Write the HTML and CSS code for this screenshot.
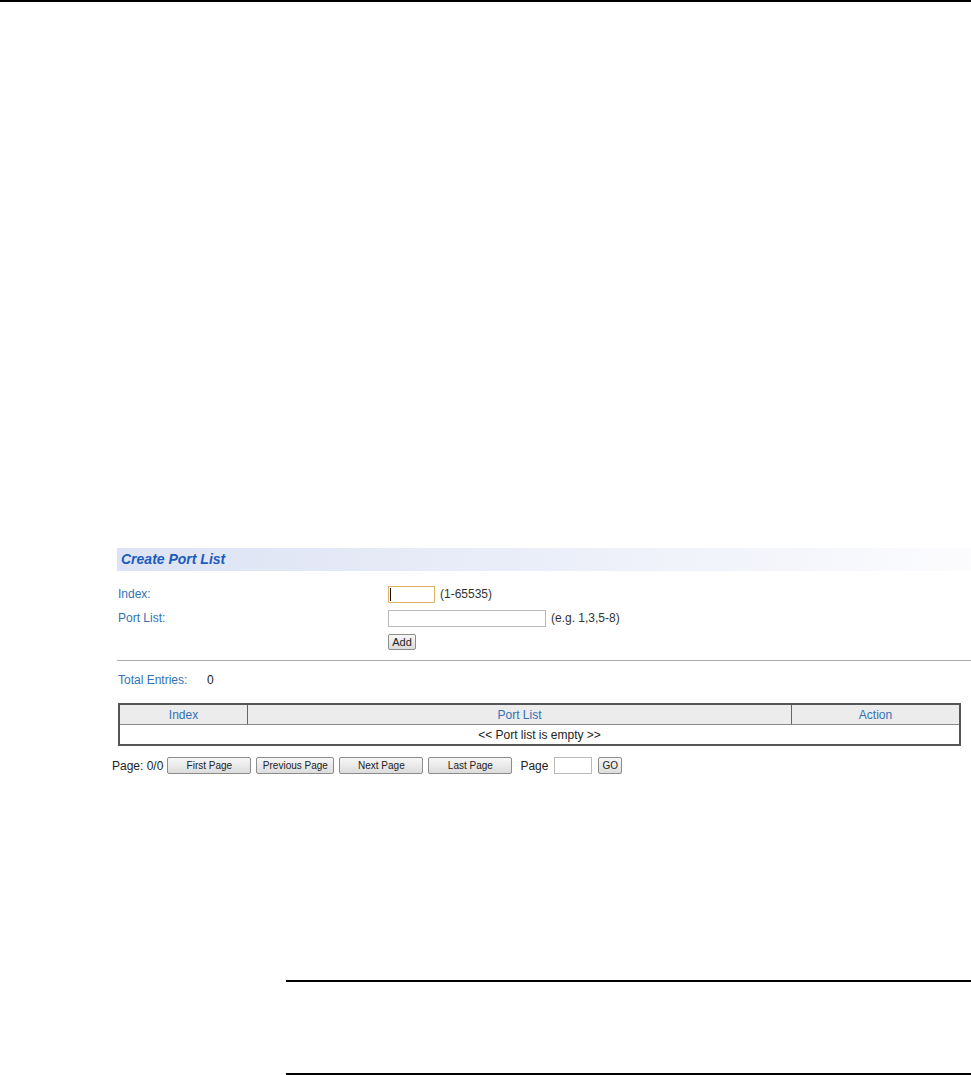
FILE: index.html
```html
<!DOCTYPE html>
<html>
<head>
<meta charset="utf-8">
<link rel="stylesheet" href="styles.css">
</head>
<body>
<div class="topline"></div>
<div class="page">
  <div class="panel">
    <div class="titlebar">Create Port List</div>
    <div class="form">
      <div class="row">
        <span class="label">Index:</span>
        <span class="field"><span class="focuswrap"><input class="inp inp-index" type="text" value=""><span class="caret"></span></span><span class="hint">(1-65535)</span></span>
      </div>
      <div class="row">
        <span class="label">Port List:</span>
        <span class="field"><input class="inp inp-list" type="text" value=""><span class="hint">(e.g. 1,3,5-8)</span></span>
      </div>
      <div class="row row-btn">
        <span class="label"></span>
        <span class="field"><button class="btn">Add</button></span>
      </div>
    </div>
    <div class="divider"></div>
    <div class="total"><span class="label">Total Entries:</span><span class="count">0</span></div>
    <table class="grid">
      <thead>
        <tr><th class="c-index">Index</th><th class="c-list">Port List</th><th class="c-action">Action</th></tr>
      </thead>
      <tbody>
        <tr><td colspan="3">&lt;&lt; Port list is empty &gt;&gt;</td></tr>
      </tbody>
    </table>
  </div>
  <div class="pager">
    <span class="ptext">Page: 0/0</span>
    <button class="btn pbtn w-first">First Page</button>
    <button class="btn pbtn w-prev">Previous Page</button>
    <button class="btn pbtn w-next">Next Page</button>
    <button class="btn pbtn w-last">Last Page</button>
    <span class="ptext pgo">Page</span>
    <input class="inp inp-page" type="text">
    <button class="btn">GO</button>
  </div>
</div>
<div class="note">
  <div class="note-line"></div>
  <div class="note-body"></div>
  <div class="note-line"></div>
</div>
</body>
</html>
```
FILE: styles.css
```css
html, body {
  margin: 0;
  padding: 0;
  background: #ffffff;
  font-family: "Liberation Sans", Arial, sans-serif;
  font-size: 12px;
  color: #222;
}
.topline {
  height: 2px;
  background: #000;
}
.page {
  padding-top: 546px;
  padding-left: 112px;
}
.panel {
  padding-left: 5px;
}
.titlebar {
  height: 23px;
  line-height: 23px;
  padding-left: 4px;
  background: linear-gradient(to right, #dde3f4 0%, #e8ecf8 40%, #f3f5fb 75%, #fcfcfe 100%);
  color: #1c5bbd;
  font-weight: bold;
  font-style: italic;
  font-size: 14px;
}
.form {
  padding-top: 11px;
}
.row {
  display: flex;
  align-items: center;
  height: 24px;
}
.label {
  color: #3271b5;
  width: 270px;
  padding-left: 1px;
}
.field {
  display: flex;
  align-items: center;
}
.inp {
  box-sizing: border-box;
  height: 17px;
  border: 1px solid #b9b9b9;
  background: #fff;
  margin: 0;
  padding: 0 2px;
  font-family: "Liberation Sans", Arial, sans-serif;
  font-size: 12px;
}
.focuswrap {
  position: relative;
  display: flex;
}
.inp-index {
  width: 47px;
  border-color: #dcb461;
}
.caret {
  position: absolute;
  left: 2px;
  top: 2px;
  width: 1px;
  height: 13px;
  background: #111;
}
.inp-list {
  width: 158px;
}
.hint {
  margin-left: 5px;
  color: #333;
}
.btn {
  box-sizing: border-box;
  height: 17px;
  padding: 0 3px;
  margin: 0;
  white-space: nowrap;
  font-family: "Liberation Sans", Arial, sans-serif;
  font-size: 10px;
  color: #222;
  background: linear-gradient(#f7f7f7, #dcdcdc);
  border: 1px solid #8c8c8c;
  border-radius: 2px;
}
.row-btn .btn {
  font-size: 11px;
  width: 28px;
  height: 16px;
}
.divider {
  margin-top: 6px;
  height: 1px;
  background: #a9a9a9;
}
.total {
  display: flex;
  height: 17px;
  align-items: center;
  margin-top: 10px;
}
.total .label {
  width: 89px;
}
.count {
  color: #222;
}
.grid {
  margin-top: 15px;
  margin-left: 1px;
  width: 843px;
  border-collapse: collapse;
  border: 2px solid #555;
}
.grid th {
  background: #ececec;
  color: #3271b5;
  font-weight: normal;
  height: 19px;
  padding: 0;
  border: 1px solid #666;
  border-bottom: 1px solid #888;
}
.grid td {
  height: 19px;
  padding: 0;
  text-align: center;
  color: #222;
}
.c-index { width: 127px; }
.c-action { width: 167px; }
.pager {
  display: flex;
  align-items: center;
  margin-top: 11px;
  height: 17px;
}
.ptext {
  color: #222;
  margin-right: 4px;
}
.pbtn {
  margin-right: 5px;
}
.w-first { width: 84px; }
.w-prev { width: 78px; }
.w-next { width: 84px; }
.w-last { width: 84px; }
.pgo {
  margin-left: 3px;
  margin-right: 6px;
}
.inp-page {
  width: 38px;
  margin-right: 6px;
}
.note {
  margin-top: 206px;
  margin-left: 286px;
}
.note-line {
  height: 2px;
  background: #000;
}
.note-body {
  height: 91px;
}
```
